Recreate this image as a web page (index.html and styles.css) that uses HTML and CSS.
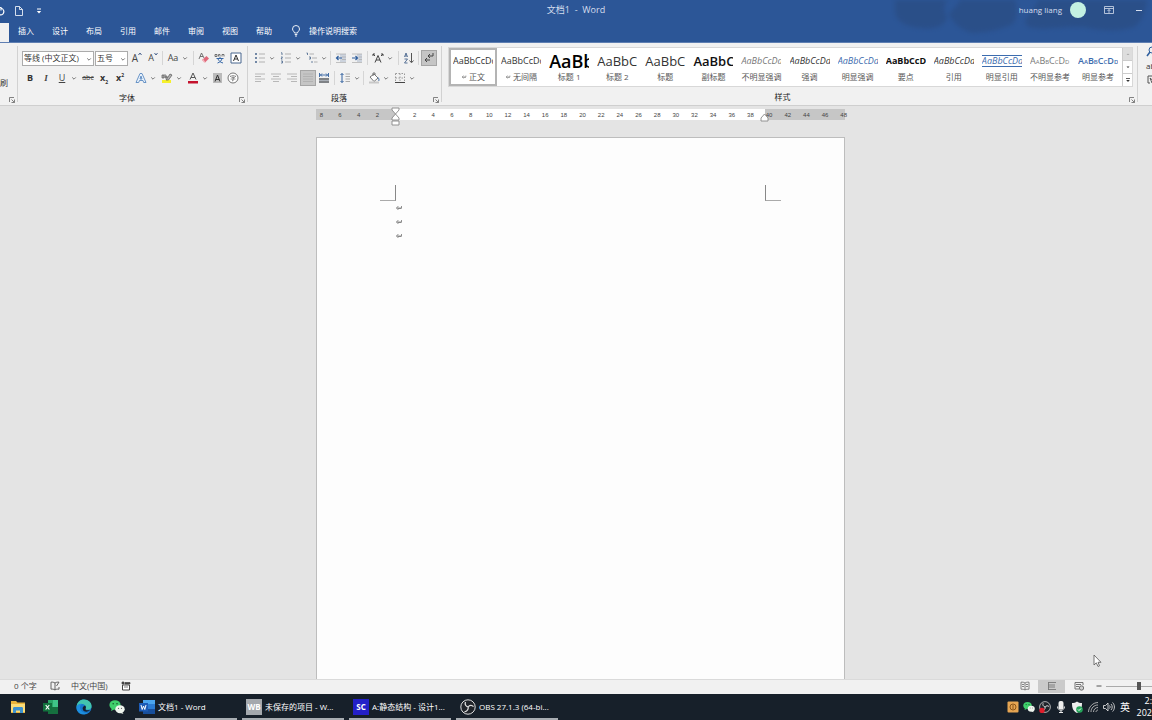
FILE: index.html
```html
<!DOCTYPE html>
<html lang="zh-CN">
<head>
<meta charset="utf-8">
<title>文档1 - Word</title>
<link rel="stylesheet" href="styles.css">
</head>
<body>
<svg class="defs" aria-hidden="true">
  <symbol id="caret" viewBox="0 0 8 8"><path d="M2.2 3.4 4 5.2 5.8 3.4" fill="none" stroke="#666" stroke-width=".9"/></symbol>
  <symbol id="launch" viewBox="0 0 8 8"><path d="M1.5 6V1.5H6M3.5 3.5 6.3 6.3M6.5 3.5v3h-3" fill="none" stroke="#666" stroke-width=".8"/></symbol>
  <symbol id="pilcrow" viewBox="0 0 8 8"><path d="M6.5 2v2h-5M3.400 2 1.500 4l1.900 2M3 4.500h3.500" fill="none" stroke="#777" stroke-width=".8"/></symbol>
  <symbol id="wechat" viewBox="0 0 16 16"><ellipse cx="6" cy="6" rx="5.6" ry="4.8" fill="#3fd06c"/><path d="m3 9-1 3 3-1.500z" fill="#3fd06c"/><circle cx="4.200" cy="4.800" r=".8" fill="#155c2c"/><circle cx="8" cy="4.800" r=".8" fill="#155c2c"/><ellipse cx="11" cy="10.200" rx="4.700" ry="4" fill="#eef5ee"/><path d="m13 13 1.500 2-3-1z" fill="#eef5ee"/><circle cx="9.500" cy="9.300" r=".6" fill="#555"/><circle cx="12.500" cy="9.300" r=".6" fill="#555"/></symbol>
  <symbol id="obs" viewBox="0 0 16 16"><circle cx="8" cy="8" r="7.200" fill="#20242a" stroke="#ddd" stroke-width="1"/><path d="M5.500 3C4.500 5.500 6 7.500 8.200 8M8.200 8c1.300-2 3.800-2.200 5.300-.3M8.200 8c.3 2.500-1.200 4.500-3.700 4.800" fill="none" stroke="#ddd" stroke-width="1.300"/></symbol>
</svg>
<div class="app">
  <header class="top">
    <svg class="clouds" viewBox="0 0 252 34" aria-hidden="true"><path d="M0 0h52c-5 8-2 12 0 18-2 8-14 12-24 10C12 27-4 23 0 0zM54 14 66 0h54c2 8 3 15-2 24-14 6-24 8-40 9-8-2-18-6-24-19zM134 15 144 0h108c-2 11-4 21-13 27-16 5-32 4-45 1-20-4-44 4-60-1-6-4-4-8 0-12z"/></svg>
    <div class="titlebar">
      <div class="quick">
        <button class="undo" aria-label="重复"><svg width="8" height="10" viewBox="0 0 8 10"><path d="M1 1.500h3V4.500M4 2c3 1 3.500 4 2 5.800C4.500 9.300 2.500 9 1 8" fill="none" stroke="#fff" stroke-width="1.200"/></svg></button>
        <button class="newdoc" aria-label="新建"><svg width="10" height="10" viewBox="0 0 10 10"><path d="M1.500.5h4L8.500 3.500v6h-7zM5.500.5v3h3" fill="none" stroke="#e8edf6" stroke-width=".9"/></svg></button>
        <button aria-label="自定义快速访问工具栏"><svg width="6" height="6" viewBox="0 0 6 6"><path d="M1 1h4" stroke="#fff"/><path d="M.8 3h4.400L3 5.400z" fill="#fff"/></svg></button>
      </div>
      <h1 class="title">文档1 &nbsp;- &nbsp;Word</h1>
      <div class="account">
        <span>huang liang</span><span class="avatar"></span>
        <button class="display" aria-label="功能区显示选项"><svg width="10" height="8" viewBox="0 0 10 8"><path d="M.5.5h9v7h-9zM.5 2.500h9M5 7V3.500M3.500 5 5 3.500 6.500 5" fill="none" stroke="#d5deee" stroke-width=".8"/></svg></button>
        <button aria-label="最小化"><svg width="8" height="8" viewBox="0 0 8 8"><path d="M1 4.500h6" stroke="#d5deee"/></svg></button>
      </div>
    </div>
    <nav class="tabs">
      <span class="active"></span>
      <button>插入</button><button>设计</button><button>布局</button><button>引用</button><button>邮件</button><button>审阅</button><button>视图</button><button>帮助</button>
      <button class="tell"><svg width="10" height="12" viewBox="0 0 10 12"><path d="M3.500 8C3.500 6.500 1.500 6 1.500 4a3.500 3.500 0 0 1 7 0c0 2-2 2.500-2 4zM3.700 9.500h2.600M4 11h2" fill="none" stroke="#fff" stroke-width=".9"/></svg>操作说明搜索</button>
    </nav>
  </header>

  <section class="ribbon">
    <div class="group clip"><span class="brush">刷</span><svg class="launch"><use href="#launch"/></svg></div>

    <div class="group font">
      <div class="row">
        <label class="combo family"><select aria-label="字体"><option>等线 (中文正文)</option></select><svg class="caret"><use href="#caret"/></svg></label>
        <label class="combo size"><select aria-label="字号"><option>五号</option></select><svg class="caret"><use href="#caret"/></svg></label>
        <button class="tool big" aria-label="增大字号">A<svg width="4" height="4" viewBox="0 0 4 4"><path d="m.5 3L2 1l1.500 2" fill="none" stroke="#47608c"/></svg></button>
        <button class="tool" aria-label="减小字号">A<svg width="4" height="4" viewBox="0 0 4 4"><path d="m.5 1L2 3l1.500-2" fill="none" stroke="#47608c"/></svg></button>
        <i class="sep"></i>
        <button class="tool">Aa</button><svg class="caret"><use href="#caret"/></svg>
        <i class="sep wide"></i>
        <button class="tool" aria-label="清除格式"><svg width="12" height="12" viewBox="0 0 12 12"><path d="m1 7 2.500-6L6 6M2 4.500h3" fill="none" stroke="#666" stroke-width=".9"/><path d="m4 8 4.500-4L11 6.500 7 10.500z" fill="#e0687a"/><path d="m4 8 2 2.600h1.500L5.300 7z" fill="#f3b5bd"/></svg></button>
        <button class="tool" aria-label="拼音指南"><svg width="12" height="12" viewBox="0 0 12 12"><path d="M1 2.500h2v2H1zM4.500 4.500v-2H6v2M8 4.500v-2h2v2" fill="none" stroke="#555" stroke-width=".8"/><path d="M2.500 6.500h7M6 5v1.500M3.500 11c3-1 4-2.500 4.500-4.500M4 7c1 2 2 3.200 5 4" fill="none" stroke="#3768a8"/></svg></button>
        <button class="tool" aria-label="字符边框"><svg width="12" height="12" viewBox="0 0 12 12"><path d="M1 1h10v10H1z" fill="#fff" stroke="#48678f"/><path d="m3.500 9L6 3l2.500 6M4.300 7h3.400" fill="none" stroke="#333"/></svg></button>
      </div>
      <div class="row">
        <button class="tool"><b>B</b></button><button class="tool"><em>I</em></button><button class="tool"><u>U</u></button><svg class="caret"><use href="#caret"/></svg>
        <button class="tool small strike"><s>abc</s></button><button class="tool"><b>x<sub>2</sub></b></button><button class="tool"><b>x<sup>2</sup></b></button>
        <button class="tool effects" aria-label="文本效果"><svg width="12" height="12" viewBox="0 0 12 12"><path d="M1 10.500 5 1.500h2l4 9H8.700L8 8.500H4.500l-.8 2zM5 7h2L6 4z" fill="#eaf3fc" stroke="#5b8ac2" stroke-width=".9"/></svg></button><svg class="caret"><use href="#caret"/></svg>
        <button class="tool after" aria-label="突出显示"><svg width="12" height="12" viewBox="0 0 12 12"><path d="M1 8h9v3H1z" fill="#f5f02c"/><path d="m5 8 4-6 2 1-3.500 5zM1 3h2v3H1zM4 2v4h2V4H4" fill="#777" fill-opacity=".5" stroke="#555" stroke-width=".7"/></svg></button><svg class="caret"><use href="#caret"/></svg>
        <button class="tool after" aria-label="字体颜色"><svg width="12" height="12" viewBox="0 0 12 12"><path d="m3 7.500L6 1l3 6.500M4 5.500h4" fill="none" stroke="#555"/><path d="M1 9h10v2.500H1z" fill="#c4122d"/></svg></button><svg class="caret"><use href="#caret"/></svg>
        <button class="tool" aria-label="字符底纹"><svg width="12" height="12" viewBox="0 0 12 12"><path d="M2 1h9v10H2z" fill="#bbb"/><path d="M4 9.500 6.500 3 9 9.500M4.800 7.500h3.400" fill="none" stroke="#333"/></svg></button>
        <button class="tool" aria-label="带圈字符"><svg width="12" height="12" viewBox="0 0 12 12"><circle cx="6" cy="6" r="5" fill="#fff" stroke="#666" stroke-width=".9"/><path d="M3.500 5V4h5v1M6 3v1M4.500 5.500h3L6 6.500V9L5 8.500M3.500 7h5" fill="none" stroke="#666" stroke-width=".7"/></svg></button>
      </div>
      <div class="caption">字体<svg class="launch"><use href="#launch"/></svg></div>
    </div>

    <div class="group para">
      <div class="row">
        <button class="tool" aria-label="项目符号"><svg width="12" height="12" viewBox="0 0 12 12"><path d="M1 2h2M1 6h2M1 10h2" stroke="#47648c" stroke-width="1.500"/><path d="M5 2h6M5 6h6M5 10h6" stroke="#aaa" stroke-width=".9"/></svg></button><svg class="caret"><use href="#caret"/></svg>
        <button class="tool list" aria-label="编号"><svg width="12" height="12" viewBox="0 0 12 12"><path d="M1 .8h1V3M1 5h1.500L1 7h1.500M1 9h1.500v2H1" fill="none" stroke="#47648c" stroke-width=".8"/><path d="M5 2h6M5 6h6M5 10h6" stroke="#aaa" stroke-width=".9"/></svg></button><svg class="caret"><use href="#caret"/></svg>
        <button class="tool list" aria-label="多级列表"><svg width="12" height="12" viewBox="0 0 12 12"><path d="M.5 1h1v2M3 5h1.500v2H3M6 9v2" fill="none" stroke="#47648c" stroke-width=".8"/><path d="M3.500 2H8M6 6h5M8 10h3.500" stroke="#aaa" stroke-width=".9"/></svg></button><svg class="caret"><use href="#caret"/></svg>
        <i class="sep mid"></i>
        <button class="tool" aria-label="减少缩进"><svg width="12" height="12" viewBox="0 0 12 12"><path d="M5 2h6v8H5z" fill="#ccd3dd"/><path d="M1 2h10M7 5h4M7 7.500h4M1 10.500h10" stroke="#aaa" stroke-width=".7"/><path d="M7 6H1.500M3.500 4 1.500 6l2 2" fill="none" stroke="#2f5f9e" stroke-width="1.200"/></svg></button>
        <button class="tool" aria-label="增加缩进"><svg width="12" height="12" viewBox="0 0 12 12"><path d="M6 2h5v8H6z" fill="#ccd3dd"/><path d="M1 2h10M8 5h3M8 7.500h3M1 10.500h10" stroke="#aaa" stroke-width=".7"/><path d="M1 6h5.500M4.500 4l2 2-2 2" fill="none" stroke="#2f5f9e" stroke-width="1.200"/></svg></button>
        <i class="sep mid"></i>
        <button class="tool" aria-label="中文版式"><svg width="12" height="12" viewBox="0 0 12 12"><path d="m3 10.500 3-7 3 7M4 8h4M1 4V2h2M1 2l2 2M11 4V2H9M11 2 9 4" fill="none" stroke="#444"/></svg></button><svg class="caret"><use href="#caret"/></svg>
        <i class="sep wide"></i>
        <button class="tool" aria-label="排序"><svg width="12" height="12" viewBox="0 0 12 12"><path d="m1.500 5L3 1l1.500 4M2 4h2M1.500 7h3l-3 4h3" fill="none" stroke="#47648c" stroke-width=".9"/><path d="M8.500 1v9M6.500 8.500l2 2.300 2-2.300" fill="none" stroke="#555"/></svg></button>
        <i class="sep"></i>
        <button class="tool pressed" aria-label="显示编辑标记"><svg width="12" height="12" viewBox="0 0 12 12"><path d="M10 1v3H5M7 2 5 4l2 2M7 8H2M4 6 2 8l2 2" fill="none" stroke="#444"/></svg></button>
      </div>
      <div class="row">
        <button class="tool" aria-label="左对齐"><svg width="12" height="12" viewBox="0 0 12 12"><path d="M1 2h10M1 4.500h6M1 7h10M1 9.500h6" stroke="#b8b8b8"/></svg></button>
        <button class="tool" aria-label="居中"><svg width="12" height="12" viewBox="0 0 12 12"><path d="M1 2h10M3 4.500h6M1 7h10M3 9.500h6" stroke="#b8b8b8"/></svg></button>
        <button class="tool" aria-label="右对齐"><svg width="12" height="12" viewBox="0 0 12 12"><path d="M1 2h10M5 4.500h6M1 7h10M5 9.500h6" stroke="#b8b8b8"/></svg></button>
        <button class="tool pressed" aria-label="两端对齐"><svg width="12" height="12" viewBox="0 0 12 12"><path d="M1 2h10M1 4.500h10M1 7h10M1 9.500h10" stroke="#b2b2b2"/></svg></button>
        <button class="tool" aria-label="分散对齐"><svg width="12" height="12" viewBox="0 0 12 12"><path d="M1.500 1v4M10.500 1v4M2 3h8M4 1.500 2.500 3 4 4.500M8 1.500 9.500 3 8 4.500" fill="none" stroke="#2f5f9e" stroke-width=".9"/><path d="M1 6h10v5H1z" fill="#aab0b8"/><path d="M1 7h10M1 10h10" stroke="#555"/></svg></button>
        <i class="sep mid"></i>
        <button class="tool" aria-label="行距"><svg width="12" height="12" viewBox="0 0 12 12"><path d="M3 1.500v9M1.500 3 3 1.500 4.500 3M1.500 9 3 10.500 4.500 9" fill="none" stroke="#2f5f9e"/><path d="M6.500 2h4.500M6.500 4.500h4.500M6.500 7h4.500M6.500 9.500h4.500" stroke="#aaa"/></svg></button><svg class="caret"><use href="#caret"/></svg>
        <i class="sep mid"></i>
        <button class="tool" aria-label="底纹"><svg width="12" height="12" viewBox="0 0 12 12"><path d="m2 5 4-3 4 4-4 3.500zM5 4V1h2v2" fill="#fff" stroke="#666" stroke-width=".9"/><path d="M10 5.500c1 1 1.300 3 .5 3.500" fill="none" stroke="#2f5f9e"/><path d="M1 10.500h10" stroke="#c8c8c8" stroke-width="2"/></svg></button><svg class="caret"><use href="#caret"/></svg>
        <button class="tool list" aria-label="边框"><svg width="12" height="12" viewBox="0 0 12 12"><path d="M1.500 1.500h9v9M1.500 1.500v9M6 1.500v9M1.500 6h9" fill="none" stroke="#999" stroke-dasharray="1.500 1.500"/><path d="M1 10.500h10" stroke="#444"/></svg></button><svg class="caret"><use href="#caret"/></svg>
      </div>
      <div class="caption">段落<svg class="launch"><use href="#launch"/></svg></div>
    </div>

    <div class="group styles">
      <div class="gallery">
        <button class="style chosen"><span class="sample">AaBbCcDd</span><span class="name"><svg><use href="#pilcrow"/></svg>正文</span></button>
        <button class="style"><span class="sample">AaBbCcDd</span><span class="name"><svg><use href="#pilcrow"/></svg>无间隔</span></button>
        <button class="style"><span class="sample h1">AaBb</span><span class="name">标题 1</span></button>
        <button class="style"><span class="sample h2">AaBbC</span><span class="name">标题 2</span></button>
        <button class="style"><span class="sample h2">AaBbC</span><span class="name">标题</span></button>
        <button class="style"><span class="sample h2 semi">AaBbC</span><span class="name">副标题</span></button>
        <button class="style"><span class="sample it grey">AaBbCcDd</span><span class="name">不明显强调</span></button>
        <button class="style"><span class="sample it">AaBbCcDd</span><span class="name">强调</span></button>
        <button class="style"><span class="sample it blue">AaBbCcDd</span><span class="name">明显强调</span></button>
        <button class="style"><span class="sample bold">AaBbCcDd</span><span class="name">要点</span></button>
        <button class="style"><span class="sample it">AaBbCcDd</span><span class="name">引用</span></button>
        <button class="style"><span class="sample it blue lined">AaBbCcDd</span><span class="name">明显引用</span></button>
        <button class="style"><span class="sample caps grey">AaBbCcDd</span><span class="name">不明显参考</span></button>
        <button class="style"><span class="sample caps blue strong">AaBbCcDd</span><span class="name">明显参考</span></button>
        <div class="scroll">
          <button class="off" aria-label="上一行"><svg width="6" height="6" viewBox="0 0 6 6"><path d="m1.500 4L3 2.500 4.500 4z" fill="#aaa"/></svg></button>
          <button aria-label="下一行"><svg width="6" height="6" viewBox="0 0 6 6"><path d="m1.500 2.500L3 4l1.500-1.500z" fill="#333"/></svg></button>
          <button aria-label="其他"><svg width="6" height="6" viewBox="0 0 6 6"><path d="M1 1.500h4" stroke="#333" stroke-width=".8"/><path d="m1.200 3L3 5l1.800-2z" fill="#333"/></svg></button>
        </div>
      </div>
      <div class="caption">样式<svg class="launch"><use href="#launch"/></svg></div>
    </div>
    <div class="group edit">
      <svg width="12" height="12" viewBox="0 0 12 12"><circle cx="6" cy="4" r="3" fill="none" stroke="#2f5f9e"/><path d="M4 6 1 10" stroke="#2f5f9e" stroke-width="1.500"/></svg>
      <span>ab</span>
      <svg width="12" height="12" viewBox="0 0 12 12"><path d="M4 9H2V2h7" fill="none" stroke="#555"/><path d="m4 4 6 5H6z" fill="#fff" stroke="#555"/></svg>
    </div>
  </section>

  <main class="canvas">
    <div class="ruler">
      <div class="ticks"><span>8</span><span>6</span><span>4</span><span>2</span><span></span><span>2</span><span>4</span><span>6</span><span>8</span><span>10</span><span>12</span><span>14</span><span>16</span><span>18</span><span>20</span><span>22</span><span>24</span><span>26</span><span>28</span><span>30</span><span>32</span><span>34</span><span>36</span><span>38</span><span>40</span><span>42</span><span>44</span><span>46</span><span>48</span></div>
      <svg class="indent left" viewBox="0 0 9 19"><path d="M1 1h7v2L4.500 7 1 3zM4.500 7 8 11v2H1v-2zM1 14h7v4H1z" fill="#fff" stroke="#888" stroke-width=".9"/></svg>
      <svg class="indent right" viewBox="0 0 9 9"><path d="M4.500 1 8 5v3H1V5z" fill="#fff" stroke="#888" stroke-width=".9"/></svg>
    </div>
    <article class="page">
      <div class="corners"><i class="cl"></i><i class="cr"></i></div>
      <div class="text">
        <p><svg><use href="#pilcrow"/></svg></p><p><svg><use href="#pilcrow"/></svg></p><p><svg><use href="#pilcrow"/></svg></p>
      </div>
    </article>
    <svg class="pointer" width="9" height="14" viewBox="0 0 9 14"><path d="M1 1v10l2.300-2.200L5 12.500l1.500-.7L5 8.300h3z" fill="#fff" stroke="#555" stroke-width=".8"/></svg>
  </main>

  <footer class="status">
    <span class="words">0 个字</span>
    <svg width="10" height="10" viewBox="0 0 10 10"><path d="M5 2C3.500 1 2 1 1 1.200v7c1-.2 2.500-.2 4 .8 1-.8 2-1 4-.8V6M5 2v7M5 2c1-.8 2.500-1 4-.8L6.500 5" fill="none" stroke="#555" stroke-width=".9"/></svg>
    <span class="lang">中文(中国)</span>
    <svg width="10" height="10" viewBox="0 0 10 10"><path d="M1.500 4v5h7V4z" fill="#fff" stroke="#444"/><path d="M1 1h2v2H1zM4 1.500h5v1.500H4zM3 6h4" fill="#444" stroke="#444" stroke-width=".7"/></svg>
    <div class="views">
      <button aria-label="阅读视图"><svg width="10" height="10" viewBox="0 0 10 10"><path d="M5 2C4 1.200 2.500 1 1 1.200v7c1.500 0 3 0 4 .8 1-.8 2.500-.8 4-.8v-7C7.500 1 6 1.200 5 2zM5 2v7M2 3.500h2M2 5.500h2M6 3.500h2M6 5.500h2" fill="none" stroke="#666" stroke-width=".8"/></svg></button>
      <button class="on" aria-label="页面视图"><svg width="10" height="10" viewBox="0 0 10 10"><path d="M1 1.500h8M1 8.500h8M1.500 1v8M1 4h7M1 6h7" stroke="#777" stroke-width=".9"/></svg></button>
      <button aria-label="Web 版式视图"><svg width="10" height="10" viewBox="0 0 10 10"><path d="M5 8H1V1.500h8V4M2 3.500h5M2 5.500h3" fill="none" stroke="#666" stroke-width=".9"/><circle cx="7.500" cy="7" r="2.200" fill="#ccc" stroke="#555" stroke-width=".8"/></svg></button>
      <button class="minus" aria-label="缩小"><svg width="6" height="6" viewBox="0 0 6 6"><path d="M.5 3h5" stroke="#555"/></svg></button>
      <input class="zoom" type="range" aria-label="缩放" min="0" max="100" value="50">
    </div>
  </footer>

  <div class="taskbar">
    <div class="pins">
      <button aria-label="文件资源管理器"><svg width="16" height="16" viewBox="0 0 16 16"><path d="M1 2h5l1.500 1.500H15V14H1z" fill="#e9b43c"/><path d="M1 5h14v8H1z" fill="#fbdc78"/><path d="M3 14V9.500c0-1 .5-1.500 1.500-1.500h7c1 0 1.500.5 1.500 1.500V14h-3v-2.500H6V14z" fill="#3c91cf"/></svg></button>
      <button aria-label="Excel"><svg width="16" height="16" viewBox="0 0 16 16"><path d="M5 1h10v14H5z" fill="#2aa566"/><path d="M10 1h5v7h-5z" fill="#40c488"/><path d="M5 8h10v7H5z" fill="#16703f"/><path d="M0 4h9v8.500H0z" fill="#12703d"/><path d="m2.700 6 3.600 4.500M6.300 6l-3.600 4.500" stroke="#fff" stroke-width="1.200"/></svg></button>
      <button aria-label="Edge"><svg width="16" height="16" viewBox="0 0 16 16"><circle cx="8" cy="8" r="7.600" fill="#1677cb"/><path d="M.5 8C1 3 4 .4 8 .4c4.500 0 7.600 3 7.600 6.600 0 2.500-1.600 3.700-3.600 3.700-2 0-2.800-.7-2.300-1.500C10.500 7.500 9 5 6 5 3 5 1 6.500.5 8z" fill="#42c5ae"/><path d="M.5 8C2 5 4 4.500 6 5c-2 1-2.500 3-1.500 5.500S8.500 14.500 12 14C5 17.500 0 13 .5 8z" fill="#1d8fe0"/><path d="M9.700 9.200C9 10.500 10 12 14 11c-2 2.500-6 2-7 0S7 7 9 6.500c.9.800 1.200 1.800.7 2.700z" fill="#16212c"/></svg></button>
      <button aria-label="微信"><svg width="16" height="16"><use href="#wechat"/></svg></button>
    </div>
    <div class="tasks">
      <button><svg width="16" height="16" viewBox="0 0 16 16"><path d="M4 1h12v14H4z" fill="#2b7cd3"/><path d="M4 1h12v4H4z" fill="#4ba5ee"/><path d="M4 10h12v5H4z" fill="#174f9c"/><path d="M0 4h9v8.500H0z" fill="#1c5bb5"/><path d="m2 6 1.200 4.500L4.500 7l1.300 3.500L7 6" fill="none" stroke="#fff"/></svg><span>文档1 - Word</span></button>
      <button><span class="logo wb">WB</span><span>未保存的项目 - W...</span></button>
      <button><span class="logo sc">SC</span><span>A:静态结构 - 设计1...</span></button>
      <button><svg width="16" height="16"><use href="#obs"/></svg><span>OBS 27.1.3 (64-bi...</span></button>
    </div>
    <div class="tray">
      <svg width="12" height="12" viewBox="0 0 12 12"><rect x=".5" y=".5" width="11" height="11" rx="1" fill="#e6a552"/><circle cx="6" cy="6" r="3" fill="none" stroke="#8a5418"/><path d="M6 4v4" stroke="#8a5418"/></svg>
      <svg width="12" height="12"><use href="#wechat"/></svg>
      <svg width="12" height="12" viewBox="0 0 16 16"><use href="#obs"/><circle cx="4" cy="12.500" r="3.500" fill="#e01e2c"/></svg>
      <svg width="12" height="12" viewBox="0 0 12 12"><rect x="3.500" y="0" width="5" height="8.500" rx="2" fill="#eee"/><path d="M2.500 5.500c0 5 7 5 7 0M6 9.500V12M4 11.500h4" fill="none" stroke="#eee"/></svg>
      <svg width="12" height="12" viewBox="0 0 12 12"><path d="M1 2c2 0 3.500-.5 5-1.500C7.500 1.500 9 2 11 2c0 5-1 8-5 10C2 10 1 7 1 2z" fill="#eee"/><circle cx="8.500" cy="8.500" r="3.300" fill="#25a55a"/><path d="m7 8.500 1 1 2-2" fill="none" stroke="#fff"/></svg>
      <svg width="12" height="12" viewBox="0 0 12 12"><path d="M1.500 11C1.500 6 6 1.500 11 1.500M4 11c0-4 3-7 7-7M6.500 11c0-2.500 2-4.500 4.500-4.500M9 11c0-1 1-2 2-2" fill="none" stroke="#bbb" stroke-width=".9"/></svg>
      <svg width="12" height="12" viewBox="0 0 12 12"><path d="M.5 4.500h2L5 2v8L2.500 7.500h-2zM6.500 4.500c.8.800.8 2.200 0 3M8 3c1.600 1.600 1.600 4.400 0 6M9.600 1.500c2.400 2.400 2.400 6.600 0 9" fill="none" stroke="#ddd" stroke-width=".9"/></svg>
      <span class="ime">英</span>
      <div class="clock"><span>2:</span><span>202</span></div>
    </div>
  </div>
</div>
</body>
</html>
```
FILE: styles.css
```css
* { box-sizing: border-box; }
body {
  margin: 0;
  font-family: "Open Sans", "Noto Sans CJK SC", sans-serif;
  font-size: 8px;
  line-height: 12px;
  color: #333;
  background: #e4e4e4;
}
button, select {
  font: inherit;
  color: inherit;
  border: 0;
  padding: 0;
  margin: 0;
  background: none;
  white-space: nowrap;
}
svg { flex: none; display: block; }
.defs { position: absolute; width: 0; height: 0; }
.app { display: flex; flex-direction: column; height: 100vh; overflow: hidden; }

/* Title bar and tabs */
.top { position: relative; flex: none; background: #2c5697; color: #fff; border-bottom: 1px solid #5f7fb2; }
.clouds { position: absolute; top: 0; right: 5px; width: 252px; height: 34px; fill: #2a4d84; opacity: .75; filter: blur(2px); }
.titlebar { position: relative; display: grid; grid-template-columns: 1fr auto 1fr; align-items: center; height: 20px; color: #d5deee; }
.quick { display: flex; align-items: center; padding-top: 2px; }
.undo { width: 14px; }
.undo svg { margin-left: -3px; }
.newdoc { width: 22px; }
.title { margin: 0; font-size: 9px; font-weight: 400; }
.account { display: flex; align-items: center; justify-content: flex-end; padding-right: 9px; }
.avatar { width: 16px; height: 16px; margin: 0 18px 0 8px; border-radius: 50%; background: #c3f1e2; }
.display { margin-right: 21px; }
.tabs { position: relative; display: flex; height: 22px; align-items: stretch; }
.tabs button { width: 34px; }
.active { width: 9px; margin-top: 3px; background: #f1f1f1; }
.tabs .tell { display: flex; align-items: center; gap: 8px; width: auto; margin-left: 10px; }

/* Ribbon */
.ribbon { flex: none; display: flex; height: 63px; overflow: hidden; background: #f1f1f1; border-bottom: 1px solid #cfcfcf; }
.group { position: relative; display: flex; flex-direction: column; flex: none; padding-top: 5px; }
.group::after { content: ""; position: absolute; right: 0; top: 3px; bottom: 3px; width: 1px; background: #d2d2d2; }
.clip { width: 18px; }
.brush { margin-top: 29px; }
.font { width: 230px; padding-left: 4px; }
.para { width: 194px; padding-left: 4px; }
.row { display: flex; align-items: center; height: 20px; }
.caption { display: flex; align-items: center; justify-content: center; flex: 1; padding: 2px 16px 0 0; color: #222; }
.launch { position: absolute; right: 2px; bottom: 1px; width: 8px; height: 8px; }
.caret { width: 8px; height: 8px; }
.combo { position: relative; height: 15px; margin-right: 1px; }
.combo select { appearance: none; display: block; width: 100%; height: 15px; padding-left: 1px; background: #fff; border: 1px solid #ababab; border-radius: 0; }
.combo .caret { position: absolute; right: 1px; top: 4px; }
.family { width: 72px; }
.size { width: 33px; }
.tool { display: flex; align-items: center; justify-content: center; width: 16px; height: 16px; font-size: 9px; color: #444; }
.tool > svg[width="4"] { align-self: flex-start; margin-top: 2px; }
.tool sub, .tool sup { font-size: 5px; line-height: 1; }
.tool b { color: #333; }
.tool em { font-family: "Liberation Serif", serif; font-weight: 700; }
.big { font-size: 10px; }
.small { font-size: 7px; }
.strike { margin-left: 2px; }
.effects { margin-left: 5px; }
.after { margin-left: 2px; }
.pressed { background: #c5c5c5; border: 1px solid #a5a5a5; }
.sep { width: 1px; height: 14px; margin: 0 2px 0 1px; background: #d5d5d5; }
.sep.mid { margin: 0 2px; }
.sep.wide { margin: 0 2px 0 4px; }
.list { margin-left: 2px; }

/* Style gallery */
.styles { flex: 1; min-width: 0; padding: 4px 5px 0 6px; }
.gallery { display: flex; height: 40px; background: #fff; border: 1px solid #d8d8d8; }
.style { flex: 1; min-width: 0; display: flex; flex-direction: column; padding: 3px 4px 0; color: #333; }
.chosen { padding: 1px 2px 0; border: 2px solid #b4b4b4; }
.sample { display: flex; align-items: center; justify-content: flex-start; width: 40px; height: 20px; overflow: hidden; font-size: 9px; }
.h1 { font-size: 18px; font-weight: 600; color: #000; }
.h2 { font-size: 13px; }
.semi { font-weight: 600; color: #111; }
.it { font-style: italic; }
.grey { color: #777; }
.blue { color: #3d6cae; }
.bold { font-weight: 700; color: #111; }
.strong { font-weight: 600; }
.caps { font-variant: small-caps; }
.lined { height: 12px; margin: 4px 0; border-top: 1px solid; border-bottom: 1px solid; }
.name { display: flex; align-items: center; justify-content: center; width: 40px; height: 12px; color: #555; }
.name svg { width: 6px; height: 6px; margin-right: 2px; }
.scroll { display: flex; flex-direction: column; width: 10px; border-left: 1px solid #ccc; }
.scroll button { flex: 1; display: grid; place-items: center; border-bottom: 1px solid #ccc; }
.scroll button:last-child { border-bottom: 0; }
.scroll .off { background: #ddd; }
.edit { width: 14px; padding: 3px 0 0 8px; gap: 2px; }
.edit::after { display: none; }

/* Document area */
.canvas { position: relative; flex: 1; min-height: 0; display: flex; flex-direction: column; padding: 3px 0 0 9px; overflow: hidden; background: #e4e4e4; }
.ruler { position: relative; flex: none; width: 529px; height: 11px; margin: 0 auto 17px; background: linear-gradient(90deg, #c6c6c6 80px, #fff 80px 449px, #c6c6c6 449px); }
.ticks { display: flex; margin: 0 -8px 0 -4px; font: 6px/13px "Liberation Sans", sans-serif; color: #444; }
.ticks span { flex: 1; text-align: center; }
.indent { position: absolute; width: 9px; }
.indent.left { left: 75px; top: -2px; height: 19px; }
.indent.right { left: 444px; top: 4px; height: 9px; }
.page { flex: 1; width: 529px; margin: 0 auto; padding: 47px 63px 0; background: #fdfdfd; border: 1px solid #bdbdbd; border-bottom: 0; }
.corners { display: flex; justify-content: space-between; height: 16px; }
.corners i { width: 16px; border-bottom: 1px solid #aaa; }
.cl { border-right: 1px solid #888; }
.cr { border-left: 1px solid #888; }
.text { padding-left: 15px; }
.text p { display: flex; align-items: center; height: 14px; margin: 0; }
.text svg { width: 8px; height: 8px; }
.pointer { position: absolute; right: 50px; bottom: 11px; }

/* Status bar */
.status { flex: none; display: flex; align-items: center; height: 15px; padding: 0 0 2px 14px; background: #f1f1f1; border-top: 1px solid #dadada; color: #444; }
.words { width: 36px; }
.lang { margin: 0 13px 0 11px; }
.views { display: flex; align-items: center; height: 13px; margin-left: auto; }
.views button { display: grid; place-items: center; width: 27px; align-self: stretch; }
.views .on { background: #cacaca; }
.views .minus { width: 14px; }
.zoom { appearance: none; width: 66px; height: 12px; margin: 0 -20px 0 0; background: linear-gradient(#aaa, #aaa) center / 100% 1px no-repeat; }
.zoom::-webkit-slider-thumb { appearance: none; width: 4px; height: 8px; background: #555; }

/* Taskbar */
.taskbar { flex: none; display: flex; height: 26px; overflow: hidden; background: #17202a; color: #fff; }
.pins { display: flex; padding-left: 1px; }
.pins button { display: grid; place-items: center; width: 33px; }
.tasks { display: flex; gap: 5px; margin-left: 2px; }
.tasks button { display: flex; align-items: center; gap: 3px; width: 102px; padding: 2px 0 0 4px; border-bottom: 2px solid #a8adb2; }
.logo { display: grid; place-items: center; width: 16px; height: 16px; font-weight: 700; }
.wb { background: #a4a8ad; }
.sc { background: #2420c8; }
.tray { display: flex; align-items: center; gap: 4px; margin-left: auto; }
.ime { width: 12px; text-align: center; font-size: 10px; }
.clock { display: flex; flex-direction: column; align-items: flex-end; width: 17px; font-size: 9px; }
```
